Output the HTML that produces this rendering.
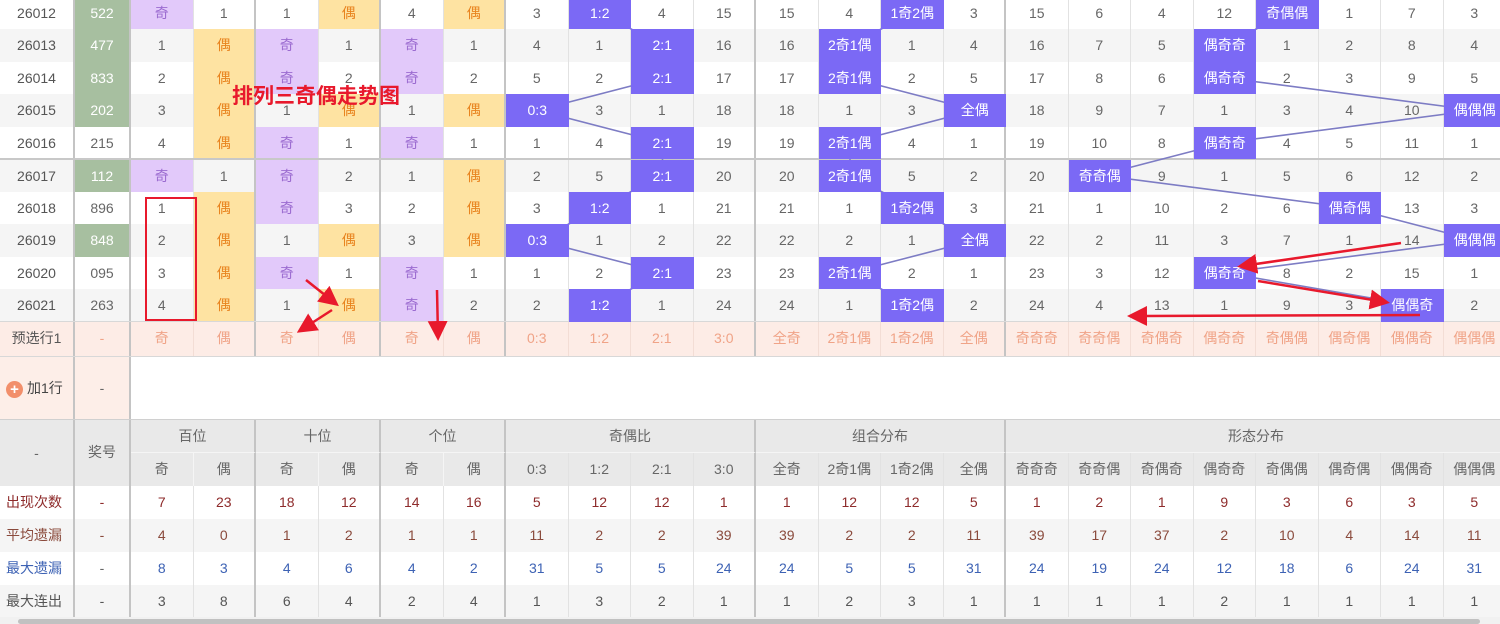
<!DOCTYPE html>
<html><head><meta charset="utf-8"><style>
*{box-sizing:border-box;margin:0;padding:0}
body{width:1500px;height:624px;overflow:hidden;background:#fff;font-family:"Liberation Sans","Noto Sans CJK SC",sans-serif;font-size:14px;color:#666;position:relative}
.r{position:absolute;left:0;width:1506px;height:32.5px;display:flex}
.r i{font-style:normal;flex:none;width:62.5px;height:100%;line-height:32.5px;text-align:center;border-right:1px solid #e2e2e2}
.r i.a{width:75px;border-right:2px solid #c4c4c4;color:#555}
.r i.b{width:56px;border-right:2px solid #c4c4c4}
.r i.g{border-right:2px solid #c4c4c4}
.gr{background:#a7bfa0;color:#fff}
.p{background:#e2c9fa;color:#9b6bd0}
.y{background:#fee3a2;color:#e8831e}
.z{background:#f5f5f5}
.bl{position:absolute;width:62.5px;height:32.5px;line-height:32.5px;text-align:center;background:#7b69f5;color:#fff}
.pre{background:#fdece6;color:#f0a387}
.pre i{border-right-color:#f3ddd5}
.h{position:absolute;background:#e9e9e9;color:#666;text-align:center}
</style></head><body>
<div class="r" style="top:-3.5px"><i class="a">26012</i><i class="b gr">522</i><i class="p">奇</i><i class="g">1</i><i>1</i><i class="y g">偶</i><i>4</i><i class="y g">偶</i><i>3</i><i></i><i>4</i><i class="g">15</i><i>15</i><i>4</i><i></i><i class="g">3</i><i>15</i><i>6</i><i>4</i><i>12</i><i></i><i>1</i><i>7</i><i>3</i></div>
<div class="r z" style="top:29px"><i class="a">26013</i><i class="b gr">477</i><i>1</i><i class="y g">偶</i><i class="p">奇</i><i class="g">1</i><i class="p">奇</i><i class="g">1</i><i>4</i><i>1</i><i></i><i class="g">16</i><i>16</i><i></i><i>1</i><i class="g">4</i><i>16</i><i>7</i><i>5</i><i></i><i>1</i><i>2</i><i>8</i><i>4</i></div>
<div class="r" style="top:61.5px"><i class="a">26014</i><i class="b gr">833</i><i>2</i><i class="y g">偶</i><i class="p">奇</i><i class="g">2</i><i class="p">奇</i><i class="g">2</i><i>5</i><i>2</i><i></i><i class="g">17</i><i>17</i><i></i><i>2</i><i class="g">5</i><i>17</i><i>8</i><i>6</i><i></i><i>2</i><i>3</i><i>9</i><i>5</i></div>
<div class="r z" style="top:94px"><i class="a">26015</i><i class="b gr">202</i><i>3</i><i class="y g">偶</i><i>1</i><i class="y g">偶</i><i>1</i><i class="y g">偶</i><i></i><i>3</i><i>1</i><i class="g">18</i><i>18</i><i>1</i><i>3</i><i class="g"></i><i>18</i><i>9</i><i>7</i><i>1</i><i>3</i><i>4</i><i>10</i><i></i></div>
<div class="r" style="top:126.5px"><i class="a">26016</i><i class="b">215</i><i>4</i><i class="y g">偶</i><i class="p">奇</i><i class="g">1</i><i class="p">奇</i><i class="g">1</i><i>1</i><i>4</i><i></i><i class="g">19</i><i>19</i><i></i><i>4</i><i class="g">1</i><i>19</i><i>10</i><i>8</i><i></i><i>4</i><i>5</i><i>11</i><i>1</i></div>
<div style="position:absolute;left:0;top:158px;width:1500px;height:2px;background:#c8c8c8"></div>
<div class="r z" style="top:159.5px"><i class="a">26017</i><i class="b gr">112</i><i class="p">奇</i><i class="g">1</i><i class="p">奇</i><i class="g">2</i><i>1</i><i class="y g">偶</i><i>2</i><i>5</i><i></i><i class="g">20</i><i>20</i><i></i><i>5</i><i class="g">2</i><i>20</i><i></i><i>9</i><i>1</i><i>5</i><i>6</i><i>12</i><i>2</i></div>
<div class="r" style="top:191.5px"><i class="a">26018</i><i class="b">896</i><i>1</i><i class="y g">偶</i><i class="p">奇</i><i class="g">3</i><i>2</i><i class="y g">偶</i><i>3</i><i></i><i>1</i><i class="g">21</i><i>21</i><i>1</i><i></i><i class="g">3</i><i>21</i><i>1</i><i>10</i><i>2</i><i>6</i><i></i><i>13</i><i>3</i></div>
<div class="r z" style="top:224px"><i class="a">26019</i><i class="b gr">848</i><i>2</i><i class="y g">偶</i><i>1</i><i class="y g">偶</i><i>3</i><i class="y g">偶</i><i></i><i>1</i><i>2</i><i class="g">22</i><i>22</i><i>2</i><i>1</i><i class="g"></i><i>22</i><i>2</i><i>11</i><i>3</i><i>7</i><i>1</i><i>14</i><i></i></div>
<div class="r" style="top:256.5px"><i class="a">26020</i><i class="b">095</i><i>3</i><i class="y g">偶</i><i class="p">奇</i><i class="g">1</i><i class="p">奇</i><i class="g">1</i><i>1</i><i>2</i><i></i><i class="g">23</i><i>23</i><i></i><i>2</i><i class="g">1</i><i>23</i><i>3</i><i>12</i><i></i><i>8</i><i>2</i><i>15</i><i>1</i></div>
<div class="r z" style="top:289px"><i class="a">26021</i><i class="b">263</i><i>4</i><i class="y g">偶</i><i>1</i><i class="y g">偶</i><i class="p">奇</i><i class="g">2</i><i>2</i><i></i><i>1</i><i class="g">24</i><i>24</i><i>1</i><i></i><i class="g">2</i><i>24</i><i>4</i><i>13</i><i>1</i><i>9</i><i>3</i><i></i><i>2</i></div>
<div style="position:absolute;left:0;top:321px;width:1500px;height:1px;background:#d8d8d8"></div>
<div class="r pre" style="top:322px;height:34px"><i class="a">预选行1</i><i class="b">-</i><i>奇</i><i class="g">偶</i><i>奇</i><i class="g">偶</i><i>奇</i><i class="g">偶</i><i>0:3</i><i>1:2</i><i>2:1</i><i class="g">3:0</i><i>全奇</i><i>2奇1偶</i><i>1奇2偶</i><i class="g">全偶</i><i>奇奇奇</i><i>奇奇偶</i><i>奇偶奇</i><i>偶奇奇</i><i>奇偶偶</i><i>偶奇偶</i><i>偶偶奇</i><i>偶偶偶</i></div>
<div style="position:absolute;left:0;top:356px;width:1500px;height:1px;background:#d8d8d8"></div>
<div style="position:absolute;left:0;top:357px;width:75px;height:62px;background:#fdeee8;border-right:2px solid #c4c4c4;line-height:62px;color:#444;padding-left:6px"><span style="display:inline-block;width:17px;height:17px;border-radius:50%;background:#f28f6b;color:#fff;line-height:17px;text-align:center;font-weight:bold;vertical-align:middle;margin-right:4px;font-size:15px">+</span>加1行</div>
<div style="position:absolute;left:75px;top:357px;width:56px;height:62px;background:#fdeee8;border-right:2px solid #c4c4c4;line-height:62px;text-align:center">-</div>
<div style="position:absolute;left:0;top:419px;width:1500px;height:1px;background:#d0d0d0"></div>

<svg style="position:absolute;left:0;top:0" width="1500" height="624">
<g fill="none" stroke="#7d7cc4" stroke-width="1.6">
<polyline points="600,12.75 662.5,45.25 662.5,77.75 537.5,110.25 662.5,142.75 662.5,175.25 600,207.75 537.5,240.25 662.5,272.75 600,305.25"/>
<polyline points="912.5,12.75 850,45.25 850,77.75 975,110.25 850,142.75 850,175.25 912.5,207.75 975,240.25 850,272.75 912.5,305.25"/>
<polyline points="1287.5,12.75 1225,45.25 1225,77.75 1475,110.25 1225,142.75 1100,175.25 1350,207.75 1475,240.25 1225,272.75 1412.5,305.25"/>
</g></svg>

<div class="bl" style="left:568.5px;top:-3.5px">1:2</div>
<div class="bl" style="left:631px;top:29px">2:1</div>
<div class="bl" style="left:631px;top:61.5px">2:1</div>
<div class="bl" style="left:506px;top:94px">0:3</div>
<div class="bl" style="left:631px;top:126.5px">2:1</div>
<div class="bl" style="left:631px;top:159.5px">2:1</div>
<div class="bl" style="left:568.5px;top:191.5px">1:2</div>
<div class="bl" style="left:506px;top:224px">0:3</div>
<div class="bl" style="left:631px;top:256.5px">2:1</div>
<div class="bl" style="left:568.5px;top:289px">1:2</div>

<div class="bl" style="left:881px;top:-3.5px">1奇2偶</div>
<div class="bl" style="left:818.5px;top:29px">2奇1偶</div>
<div class="bl" style="left:818.5px;top:61.5px">2奇1偶</div>
<div class="bl" style="left:943.5px;top:94px">全偶</div>
<div class="bl" style="left:818.5px;top:126.5px">2奇1偶</div>
<div class="bl" style="left:818.5px;top:159.5px">2奇1偶</div>
<div class="bl" style="left:881px;top:191.5px">1奇2偶</div>
<div class="bl" style="left:943.5px;top:224px">全偶</div>
<div class="bl" style="left:818.5px;top:256.5px">2奇1偶</div>
<div class="bl" style="left:881px;top:289px">1奇2偶</div>

<div class="bl" style="left:1256px;top:-3.5px">奇偶偶</div>
<div class="bl" style="left:1193.5px;top:29px">偶奇奇</div>
<div class="bl" style="left:1193.5px;top:61.5px">偶奇奇</div>
<div class="bl" style="left:1443.5px;top:94px;overflow:hidden;white-space:nowrap">偶偶偶</div>
<div class="bl" style="left:1193.5px;top:126.5px">偶奇奇</div>
<div class="bl" style="left:1068.5px;top:159.5px">奇奇偶</div>
<div class="bl" style="left:1318.5px;top:191.5px">偶奇偶</div>
<div class="bl" style="left:1443.5px;top:224px;overflow:hidden;white-space:nowrap">偶偶偶</div>
<div class="bl" style="left:1193.5px;top:256.5px">偶奇奇</div>
<div class="bl" style="left:1381px;top:289px">偶偶奇</div>

<div style="position:absolute;left:232px;top:80px;color:#e8192c;font-size:21px;font-weight:bold;font-family:'Liberation Sans','Noto Sans CJK SC',sans-serif">排列三奇偶走势图</div>
<div style="position:absolute;left:145px;top:197px;width:52px;height:124px;border:2px solid #e8192c"></div>
<svg style="position:absolute;left:0;top:0" width="1500" height="624">
<defs><marker id="m" markerWidth="8" markerHeight="8" refX="6" refY="4" orient="auto"><path d="M0,0 L8,4 L0,8 Z" fill="#e8192c"/></marker></defs>
<g stroke="#e8192c" stroke-width="2.5" fill="none" marker-end="url(#m)">
<line x1="306" y1="280" x2="335" y2="303"/>
<line x1="332" y1="310" x2="301" y2="330"/>
<line x1="437" y1="290" x2="438" y2="336"/>
<line x1="1401" y1="243" x2="1242" y2="266"/>
<line x1="1258" y1="281" x2="1385" y2="302"/>
<line x1="1420" y1="315" x2="1132" y2="316"/>
</g></svg>

<div class="r" style="top:453px;height:33px;background:#e9e9e9;left:131px"><i style="border-right-color:#f5f5f5">奇</i><i class="g">偶</i><i style="border-right-color:#f5f5f5">奇</i><i class="g">偶</i><i style="border-right-color:#f5f5f5">奇</i><i class="g">偶</i><i>0:3</i><i>1:2</i><i>2:1</i><i class="g">3:0</i><i>全奇</i><i>2奇1偶</i><i>1奇2偶</i><i class="g">全偶</i><i>奇奇奇</i><i>奇奇偶</i><i>奇偶奇</i><i>偶奇奇</i><i>奇偶偶</i><i>偶奇偶</i><i>偶偶奇</i><i>偶偶偶</i></div>
<div class="h" style="left:0;top:420px;width:75px;height:66px;line-height:66px;border-right:2px solid #c4c4c4">-</div>
<div class="h" style="left:75px;top:420px;width:56px;height:66px;line-height:64px;border-right:2px solid #c4c4c4">奖号</div>
<div class="h" style="left:131px;top:420px;width:125px;height:33px;line-height:33px;border-right:2px solid #c4c4c4;border-bottom:1px solid #f5f5f5">百位</div>
<div class="h" style="left:256px;top:420px;width:125px;height:33px;line-height:33px;border-right:2px solid #c4c4c4;border-bottom:1px solid #f5f5f5">十位</div>
<div class="h" style="left:381px;top:420px;width:125px;height:33px;line-height:33px;border-right:2px solid #c4c4c4;border-bottom:1px solid #f5f5f5">个位</div>
<div class="h" style="left:506px;top:420px;width:250px;height:33px;line-height:33px;border-right:2px solid #c4c4c4;border-bottom:1px solid #f5f5f5">奇偶比</div>
<div class="h" style="left:756px;top:420px;width:250px;height:33px;line-height:33px;border-right:2px solid #c4c4c4;border-bottom:1px solid #f5f5f5">组合分布</div>
<div class="h" style="left:1006px;top:420px;width:500px;height:33px;line-height:33px;border-bottom:1px solid #f5f5f5">形态分布</div>

<div class="r" style="top:486px;height:33px;color:#8e2b2b"><i class="a" style="color:#8e2b2b;text-align:left;padding-left:6px">出现次数</i><i class="b" style="color:#8e2b2b">-</i><i>7</i><i class="g">23</i><i>18</i><i class="g">12</i><i>14</i><i class="g">16</i><i>5</i><i>12</i><i>12</i><i class="g">1</i><i>1</i><i>12</i><i>12</i><i class="g">5</i><i>1</i><i>2</i><i>1</i><i>9</i><i>3</i><i>6</i><i>3</i><i>5</i></div>
<div class="r z" style="top:519px;height:33px;color:#8a4a3c"><i class="a" style="color:#8a4a3c;text-align:left;padding-left:6px">平均遗漏</i><i class="b">-</i><i>4</i><i class="g">0</i><i>1</i><i class="g">2</i><i>1</i><i class="g">1</i><i>11</i><i>2</i><i>2</i><i class="g">39</i><i>39</i><i>2</i><i>2</i><i class="g">11</i><i>39</i><i>17</i><i>37</i><i>2</i><i>10</i><i>4</i><i>14</i><i>11</i></div>
<div class="r" style="top:552px;height:33px;color:#3d62b4"><i class="a" style="color:#3d62b4;text-align:left;padding-left:6px">最大遗漏</i><i class="b" style="color:#666">-</i><i>8</i><i class="g">3</i><i>4</i><i class="g">6</i><i>4</i><i class="g">2</i><i>31</i><i>5</i><i>5</i><i class="g">24</i><i>24</i><i>5</i><i>5</i><i class="g">31</i><i>24</i><i>19</i><i>24</i><i>12</i><i>18</i><i>6</i><i>24</i><i>31</i></div>
<div class="r z" style="top:585px;height:32px;color:#555"><i class="a" style="text-align:left;padding-left:6px">最大连出</i><i class="b">-</i><i>3</i><i class="g">8</i><i>6</i><i class="g">4</i><i>2</i><i class="g">4</i><i>1</i><i>3</i><i>2</i><i class="g">1</i><i>1</i><i>2</i><i>3</i><i class="g">1</i><i>1</i><i>1</i><i>1</i><i>2</i><i>1</i><i>1</i><i>1</i><i>1</i></div>
<div style="position:absolute;left:0;top:617px;width:1500px;height:7px;background:#f1f1f1"></div>
<div style="position:absolute;left:18px;top:619px;width:1462px;height:5px;background:#c1c1c1;border-radius:3px"></div>
</body></html>
